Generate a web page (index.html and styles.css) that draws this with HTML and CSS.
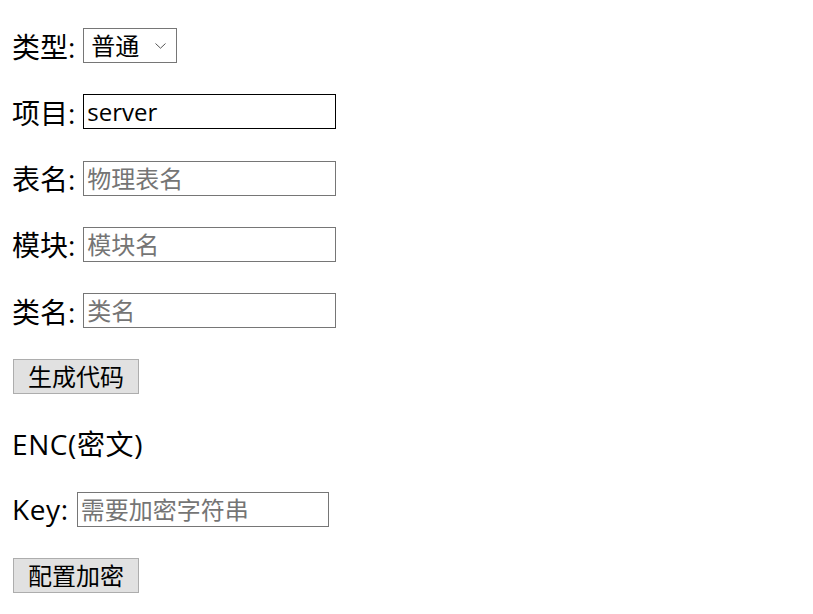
FILE: index.html
```html
<!DOCTYPE html>
<html lang="zh">
<head>
<meta charset="utf-8">
<title>代码生成</title>
<link rel="stylesheet" href="styles.css">
</head>
<body>
<div class="form">
  <div class="row">
    <span class="label">类型:</span>
    <span class="select-wrap">
      <select class="select"><option>普通</option></select>
      <svg class="chev" width="11" height="6" viewBox="0 0 11 6"><path d="M0.5 0.5 L5.5 5.2 L10.5 0.5" fill="none" stroke="#555" stroke-width="1"/></svg>
    </span>
  </div>
  <div class="row">
    <span class="label">项目:</span>
    <input class="field active" type="text" value="server">
  </div>
  <div class="row">
    <span class="label">表名:</span>
    <input class="field" type="text" placeholder="物理表名">
  </div>
  <div class="row">
    <span class="label">模块:</span>
    <input class="field" type="text" placeholder="模块名">
  </div>
  <div class="row">
    <span class="label">类名:</span>
    <input class="field" type="text" placeholder="类名">
  </div>
  <div class="row">
    <button class="btn">生成代码</button>
  </div>
  <div class="row">
    <span class="label latin">ENC(密文)</span>
  </div>
  <div class="row">
    <span class="label latin">Key:</span>
    <input class="field key" type="text" placeholder="需要加密字符串">
  </div>
  <div class="row">
    <button class="btn">配置加密</button>
  </div>
</div>
</body>
</html>
```
FILE: styles.css
```css
html, body {
  margin: 0;
  padding: 0;
  background: #fff;
}
body {
  font-family: "Open Sans", "Noto Sans CJK SC", sans-serif;
  font-size: 24px;
  color: #000;
}
.form {
  display: flex;
  flex-direction: column;
  gap: 31.25px;
  padding: 28px 0 0 12px;
}
.row {
  display: flex;
  align-items: center;
  height: 35px;
}
.label {
  font-size: 28px;
  margin-right: 8px;
  white-space: nowrap;
}
.label.latin {
  letter-spacing: 0.6px;
}
.select-wrap {
  position: relative;
  display: inline-block;
}
.select {
  appearance: none;
  -webkit-appearance: none;
  box-sizing: border-box;
  width: 94px;
  height: 35px;
  border: 1px solid #767676;
  border-radius: 0;
  background: #fff;
  font-family: "Open Sans", "Noto Sans CJK SC", sans-serif;
  font-size: 24px;
  color: #000;
  padding: 0 0 0 7px;
  margin: 0;
}
.chev {
  position: absolute;
  left: 72px;
  top: 15px;
  pointer-events: none;
}
.field {
  box-sizing: border-box;
  width: 253px;
  height: 35px;
  border: 1px solid #767676;
  border-radius: 0;
  margin: 0;
  padding: 0 3px;
  font-family: "Open Sans", "Noto Sans CJK SC", sans-serif;
  font-size: 24px;
  color: #000;
  outline: none;
}
.field.active {
  border-color: #000;
}
.field.key {
  width: 252px;
}
.field::placeholder {
  color: #757575;
}
.btn {
  box-sizing: border-box;
  width: 126px;
  height: 35px;
  margin: 0 0 0 1px;
  padding: 0;
  background: #e1e1e1;
  border: 1px solid #adadad;
  border-radius: 0;
  font-family: "Open Sans", "Noto Sans CJK SC", sans-serif;
  font-size: 24px;
  color: #000;
  line-height: 1;
}
```
